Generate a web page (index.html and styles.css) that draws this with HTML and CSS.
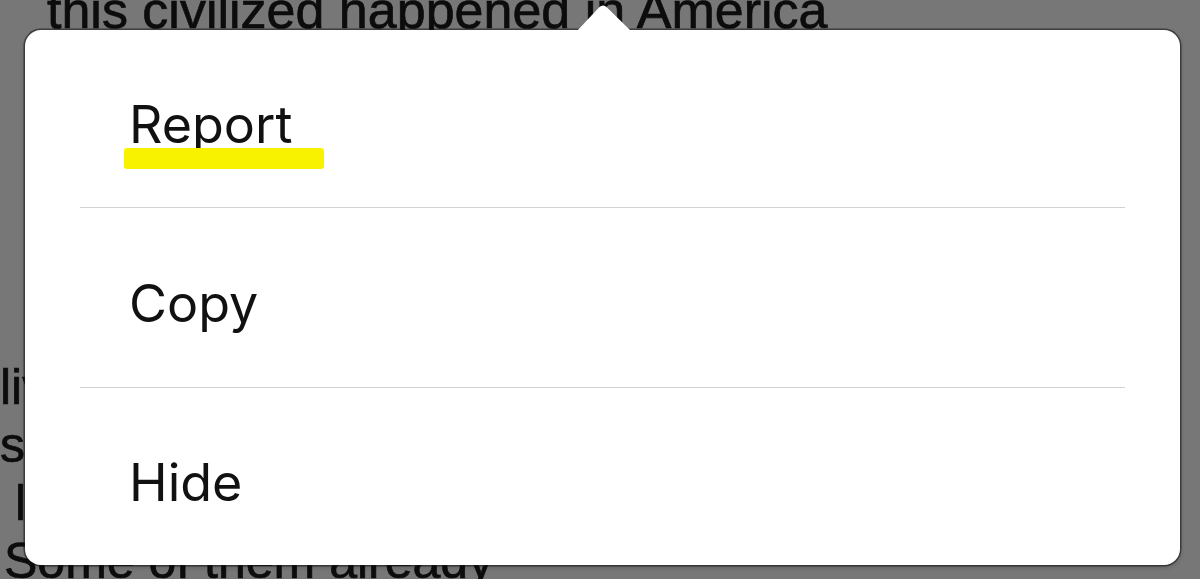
FILE: index.html
```html
<!DOCTYPE html>
<html lang="en">
<head>
    <meta charset="UTF-8">
    <meta name="viewport" content="width=device-width, initial-scale=1.0">
    <title>Comment options</title>
    <link rel="stylesheet" href="styles.css">
</head>
<body>
    <!-- Article text under the dimmed overlay -->
    <div class="article">
        <p class="para first">this civilized happened in America</p>
        <p class="para second">
            <span class="line">lived</span>
            <span class="line">so</span>
            <span class="line indent-lg">lot</span>
            <span class="line indent-sm">Some of them already</span>
        </p>
    </div>

    <!-- Popover menu -->
    <div class="popover">
        <svg class="popover-arrow" width="54" height="27" viewBox="0 0 54 27">
            <path d="M0 27 L22 3.5 Q26 -0.5 30 3.5 L54 27 Z" fill="#fff"/>
        </svg>
        <ul class="menu">
            <li class="menu-item"><span class="menu-label marked">Report</span></li>
            <li class="menu-item middle"><span class="menu-label">Copy</span></li>
            <li class="menu-item"><span class="menu-label">Hide</span></li>
        </ul>
    </div>
</body>
</html>
```

FILE: styles.css
```css
html, body { height: 100%; }
body { margin: 0; overflow: hidden; position: relative; background: #777; font-family: "Liberation Sans", Arial, sans-serif; }

.article { padding-left: 47px; margin-top: -19px; font-size: 50px; line-height: 58px; color: #0c0c0c; -webkit-text-stroke: 0.7px #0c0c0c; }
.para { margin: 0; }
.para.first { font-size: 52px; }
.para.second { margin-top: 319px; margin-left: -47px; }
.line { display: block; white-space: nowrap; }
.indent-lg { padding-left: 15px; }
.indent-sm { padding-left: 4px; }

.popover { position: absolute; left: 25px; top: 30px; width: 1155px; height: 535px; background: #fff; border-radius: 16px; box-shadow: 0 0 0 1.5px rgba(20, 20, 20, 0.55), 0 2px 5px rgba(0, 0, 0, 0.25); }
.popover-arrow { position: absolute; left: 552px; top: -26px; display: block; }

.menu { list-style: none; margin: 0; padding: 0; display: flex; flex-direction: column; }
.menu-item { box-sizing: border-box; height: 177px; padding: 12px 0 0 104px; display: flex; align-items: center; font-family: Inter, "Liberation Sans", sans-serif; font-size: 52px; line-height: 60px; color: #111; }
.menu-item.middle { height: 181px; position: relative; }
.menu-item.middle::before, .menu-item.middle::after { content: ""; position: absolute; left: 55px; right: 55px; height: 1px; background: #d2d2d2; }
.menu-item.middle::before { top: 0; }
.menu-item.middle::after { bottom: 0; }

.menu-label { position: relative; }
.menu-label.marked::after { content: ""; position: absolute; left: -5px; top: 53px; width: 200px; height: 21px; background: #f8f200; border-radius: 3px; }
```
